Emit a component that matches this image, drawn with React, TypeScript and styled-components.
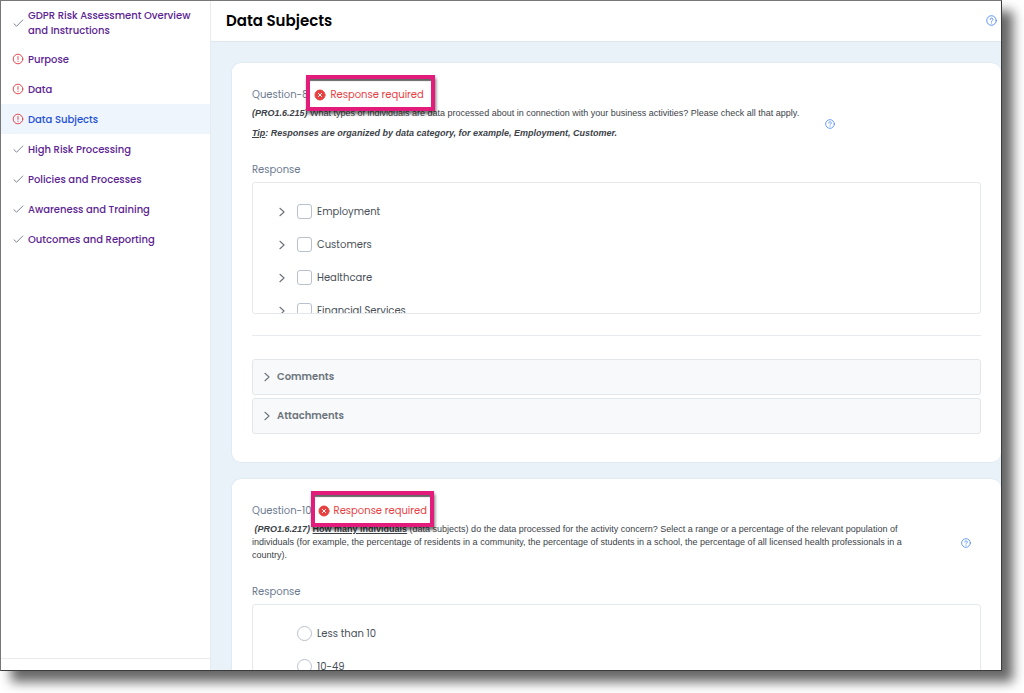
import React from "react";
import styled, { createGlobalStyle, css } from "styled-components";

const UI = `Poppins, Inter, "Open Sans", sans-serif`;
const BODY = `"Liberation Sans", Arial, Helvetica, sans-serif`;

const GlobalStyle = createGlobalStyle`
  *, *::before, *::after { box-sizing: border-box; }
  body { margin: 0; background: #fff; font-family: ${UI}; font-size: 10px; color: #495057; }
`;

const Page = styled.div`
  height: 100vh;
  padding: 0 22px 22px 0;
  overflow: hidden;
`;

const Frame = styled.div`
  display: flex;
  height: 100%;
  border: 1px solid #3c3c3c;
  border-top-color: #777;
  border-left-color: #777;
  box-shadow: 11px 11px 11px rgba(0, 0, 0, 0.6);
  background: #fff;
`;

const Clip = styled.div`
  display: flex;
  flex: 1;
  min-width: 0;
  overflow: hidden;
`;

const Sidebar = styled.aside`
  display: flex;
  flex-direction: column;
  justify-content: space-between;
  flex: 0 0 210px;
  border-right: 1px solid #e4ebf2;
`;

const NavLink = styled.a<{ $active?: boolean }>`
  display: flex;
  align-items: center;
  gap: 4px;
  min-height: 30px;
  padding: 0 12px 0 11px;
  line-height: 15px;
  font-weight: 500;
  text-decoration: none;
  color: ${(p) => (p.$active ? "#1d4fd8" : "#5c2392")};
  background: ${(p) => (p.$active ? "#eef5fd" : "transparent")};
  svg { flex: none; }
`;

const Nav = styled.nav`
  ${NavLink}:first-child { min-height: 43px; }
`;

const SideFooter = styled.div`
  height: 12px;
  border-top: 1px solid #ececee;
`;

const Main = styled.main`
  display: flex;
  flex-direction: column;
  flex: 1;
  min-width: 0;
  background: #e9f1f9;
`;

const Header = styled.header`
  display: flex;
  align-items: center;
  justify-content: space-between;
  flex: 0 0 41px;
  padding: 0 4px 1px 15px;
  border-bottom: 1px solid #dfe7ef;
  background: #fff;
`;

const Title = styled.h1`
  margin: 0;
  font-size: 15px;
  font-weight: 600;
  color: #000;
`;

const IconButton = styled.button`
  display: flex;
  flex: none;
  padding: 0;
  border: 0;
  background: none;
  color: #4f8bf5;
`;

const Cards = styled.div`
  display: flex;
  flex-direction: column;
  gap: 15px;
  flex: 1;
  min-height: 0;
  overflow: hidden;
  padding: 20px 0 0 20px;
`;

const Card = styled.section`
  flex: none;
  padding: 25px 20px 28px;
  border: 1px solid #e1eaf3;
  border-right: 0;
  border-radius: 10px;
  background: #fff;
`;

const QuestionHead = styled.div`
  display: flex;
  align-items: center;
  gap: 6px;
  height: 14px;
  line-height: 14px;
  color: #6b7a90;
`;

const Status = styled.div<{ $wide?: boolean }>`
  position: relative;
  display: flex;
  align-items: center;
  gap: 4px;
  color: #e8403f;
  &::before {
    content: "";
    position: absolute;
    inset: ${(p) => (p.$wide ? "-13px -11px -9px -8px" : "-13px -7px -9px -7px")};
    border: 4px solid #e31b7b;
    box-shadow: 1px 3px 3px rgba(0, 0, 0, 0.55), inset 0 3px 1px -1px rgba(0, 0, 0, 0.6);
    background: #fff;
  }
  > * { position: relative; }
`;

const Prompt = styled.div<{ $gap: number }>`
  display: flex;
  align-items: center;
  gap: ${(p) => p.$gap}px;
  margin-top: 5px;
  font-family: ${BODY};
  font-size: 9px;
  line-height: 13px;
  color: #3c4248;
`;

const PromptText = styled.div`
  max-width: 668px;
  p { margin: 0; }
  p + p { margin-top: 7px; }
`;

const ResponseLabel = styled.div`
  margin: 22px 0 4px;
  line-height: 16px;
  color: #6b7a90;
`;

const Options = styled.div`
  height: 132px;
  padding-top: 12px;
  overflow: hidden;
  border: 1px solid #e6e9ec;
  border-radius: 3px;
`;

const OptionRow = styled.div`
  display: grid;
  grid-template-columns: 20px auto;
  align-items: center;
  height: 33px;
  padding-left: 24px;
`;

const OptionLabel = styled.label`
  display: flex;
  align-items: center;
  gap: 5px;
  grid-column: 2;
`;

const box = css`
  appearance: none;
  width: 15px;
  height: 15px;
  margin: 0;
  border: 1px solid #b8c1cc;
  background: #fff;
`;
const Checkbox = styled.input`${box} border-radius: 3px;`;
const Radio = styled.input`${box} border-radius: 50%;`;

const Toggle = styled(IconButton)`color: #6c737a;`;

const Divider = styled.hr`
  margin: 21px 0 23px;
  border: 0;
  border-top: 1px solid #e6eaef;
`;

const Accordion = styled.button`
  display: flex;
  align-items: center;
  gap: 5px;
  width: 100%;
  height: 36px;
  padding: 0 9px;
  border: 1px solid #e4e7ea;
  border-radius: 3px;
  background: #f8f9fa;
  font-family: ${UI};
  font-size: 10px;
  font-weight: 600;
  color: #6c757d;
  & + & { margin-top: 3px; }
`;

const Svg = ({ size = 10, w = 1, children }: { size?: number; w?: number; children: React.ReactNode }) => (
  <svg width={size} height={size} viewBox="0 0 12 12" fill="none" stroke="currentColor" strokeWidth={w} strokeLinecap="round" strokeLinejoin="round" aria-hidden="true">
    {children}
  </svg>
);

const Check = styled.span`display: flex; color: #7b8794;`;
const Alert = styled.span`display: flex; color: #e5484d;`;

const CheckIcon = () => (
  <Check><Svg size={12}><path d="M2 6.8 4.6 9.2 10.8 3" /></Svg></Check>
);
const AlertIcon = () => (
  <Alert><Svg size={12}><circle cx="6" cy="6" r="4.8" /><path d="M6 3.6v2.8M6 8.1v.3" /></Svg></Alert>
);
const Chevron = () => <Svg w={1.3}><path d="M3.5 1.5 8.5 6 3.5 10.5" /></Svg>;
const ErrorIcon = () => (
  <Svg size={12}><circle cx="6" cy="6" r="5" fill="currentColor" /><path d="m4.4 4.4 3.2 3.2M7.6 4.4 4.4 7.6" stroke="#fff" /></Svg>
);
const Help = ({ size }: { size?: number }) => (
  <IconButton type="button" aria-label="Help">
    <Svg size={size}><circle cx="6" cy="6" r="5.2" /><path d="M4.5 4.9a1.5 1.5 0 1 1 2.3 1.2Q6 6.5 6 7M6 8.6v.2" /></Svg>
  </IconButton>
);

const sections = [
  { name: "GDPR Risk Assessment Overview and Instructions", done: true },
  { name: "Purpose" },
  { name: "Data" },
  { name: "Data Subjects", active: true },
  { name: "High Risk Processing", done: true },
  { name: "Policies and Processes", done: true },
  { name: "Awareness and Training", done: true },
  { name: "Outcomes and Reporting", done: true },
];

export default function App() {
  return (
    <Page>
      <GlobalStyle />
      <Frame>
        <Clip>
          <Sidebar>
            <Nav>
              {sections.map((s) => (
                <NavLink key={s.name} href="#" $active={s.active} aria-current={s.active ? "page" : undefined}>
                  {s.done ? <CheckIcon /> : <AlertIcon />}
                  <span>{s.name}</span>
                </NavLink>
              ))}
            </Nav>
            <SideFooter />
          </Sidebar>
          <Main>
            <Header>
              <Title>Data Subjects</Title>
              <Help size={11} />
            </Header>
            <Cards>
              <Card>
                <QuestionHead>
                  <span>Question-8</span>
                  <Status $wide><ErrorIcon /><span>Response required</span></Status>
                </QuestionHead>
                <Prompt $gap={26}>
                  <PromptText>
                    <p><b><i>(PRO1.6.215)</i></b> What types of individuals are data processed about in connection with your business activities? Please check all that apply.</p>
                    <p><b><i><u>Tip</u>: Responses are organized by data category, for example, Employment, Customer.</i></b></p>
                  </PromptText>
                  <Help />
                </Prompt>
                <ResponseLabel id="r8">Response</ResponseLabel>
                <Options role="group" aria-labelledby="r8">
                  {["Employment", "Customers", "Healthcare", "Financial Services"].map((o) => (
                    <OptionRow key={o}>
                      <Toggle type="button" aria-label={"Expand " + o}><Chevron /></Toggle>
                      <OptionLabel><Checkbox type="checkbox" />{o}</OptionLabel>
                    </OptionRow>
                  ))}
                </Options>
                <Divider />
                <Accordion type="button"><Chevron />Comments</Accordion>
                <Accordion type="button"><Chevron />Attachments</Accordion>
              </Card>
              <Card>
                <QuestionHead>
                  <span>Question-10</span>
                  <Status><ErrorIcon /><span>Response required</span></Status>
                </QuestionHead>
                <Prompt $gap={41}>
                  <PromptText>
                    <p>&nbsp;<b><i>(PRO1.6.217)</i></b> <b><u>How many individuals</u></b> (data subjects) do the data processed for the activity concern? Select a range or a percentage of the relevant population of individuals (for example, the percentage of residents in a community, the percentage of students in a school, the percentage of all licensed health professionals in a country).</p>
                  </PromptText>
                  <Help />
                </Prompt>
                <ResponseLabel id="r10">Response</ResponseLabel>
                <Options role="radiogroup" aria-labelledby="r10">
                  {["Less than 10", "10-49"].map((o) => (
                    <OptionRow key={o}>
                      <OptionLabel><Radio type="radio" name="q10" />{o}</OptionLabel>
                    </OptionRow>
                  ))}
                </Options>
              </Card>
            </Cards>
          </Main>
        </Clip>
      </Frame>
    </Page>
  );
}
